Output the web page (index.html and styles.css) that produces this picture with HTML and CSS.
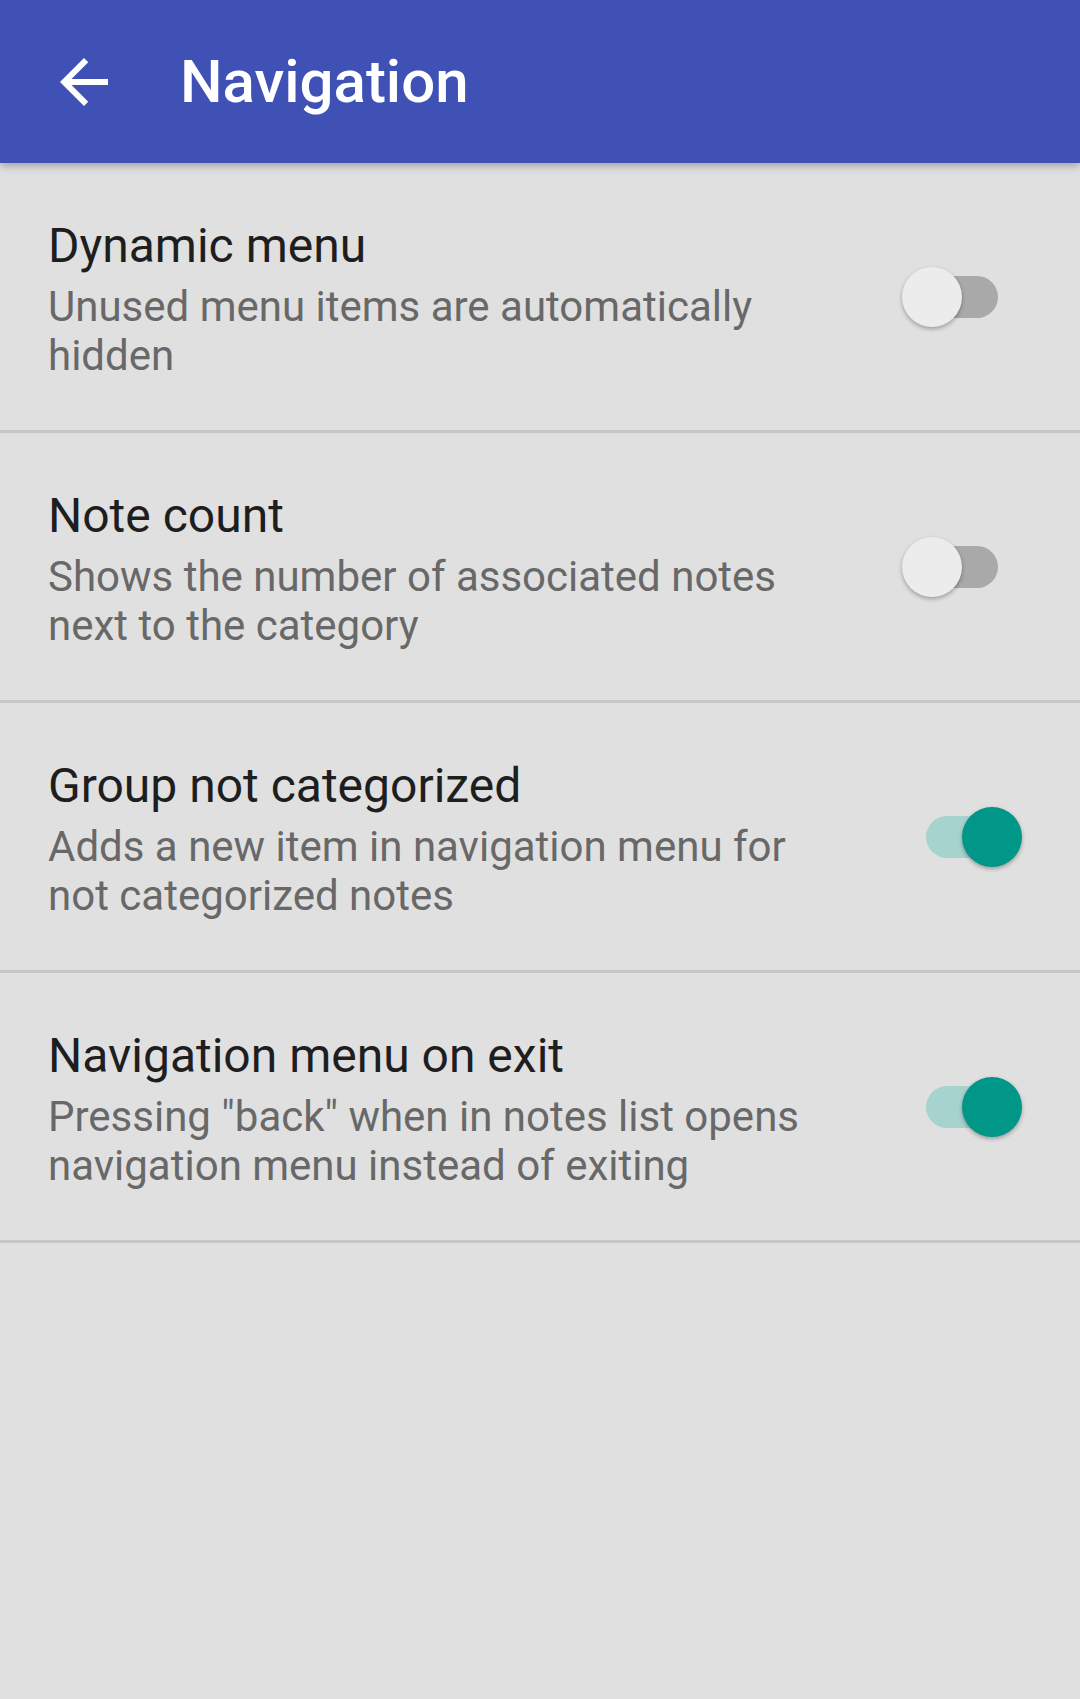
FILE: index.html
```html
<!DOCTYPE html>
<html lang="en">
<head>
<meta charset="utf-8">
<title>Navigation</title>
<link rel="stylesheet" href="styles.css">
</head>
<body>
<header class="appbar">
  <button class="back" aria-label="Back">
    <svg width="72" height="72" viewBox="0 0 24 24"><path fill="#ffffff" d="M20 11H7.83l5.59-5.59L12 4l-8 8 8 8 1.41-1.41L7.83 13H20v-2z"/></svg>
  </button>
  <h1 class="title">Navigation</h1>
</header>
<main class="prefs">
  <div class="pref">
    <div class="pref-text">
      <div class="pref-title">Dynamic menu</div>
      <div class="pref-summary">Unused menu items are automatically hidden</div>
    </div>
    <div class="switch"><span class="track"></span><span class="thumb"></span></div>
  </div>
  <div class="pref">
    <div class="pref-text">
      <div class="pref-title">Note count</div>
      <div class="pref-summary">Shows the number of associated notes next to the category</div>
    </div>
    <div class="switch"><span class="track"></span><span class="thumb"></span></div>
  </div>
  <div class="pref">
    <div class="pref-text">
      <div class="pref-title">Group not categorized</div>
      <div class="pref-summary">Adds a new item in navigation menu for not categorized notes</div>
    </div>
    <div class="switch on"><span class="track"></span><span class="thumb"></span></div>
  </div>
  <div class="pref">
    <div class="pref-text">
      <div class="pref-title">Navigation menu on exit</div>
      <div class="pref-summary">Pressing "back" when in notes list opens navigation menu instead of exiting</div>
    </div>
    <div class="switch on"><span class="track"></span><span class="thumb"></span></div>
  </div>
</main>
</body>
</html>
```
FILE: styles.css
```css
html, body {
  margin: 0;
  padding: 0;
}
body {
  background: #e0e0e0;
  font-family: Roboto, "Noto Sans", "Liberation Sans", sans-serif;
  width: 1080px;
  min-height: 1699px;
}
.appbar {
  position: relative;
  z-index: 2;
  height: 163px;
  background: #3f51b5;
  display: flex;
  align-items: center;
  padding-left: 48px;
  box-shadow: 0 3px 8px rgba(0, 0, 0, 0.28);
}
.back {
  width: 72px;
  height: 72px;
  padding: 0;
  margin: 0;
  border: 0;
  background: transparent;
  display: block;
}
.back svg {
  display: block;
}
.title {
  margin: 0 0 0 60px;
  color: #ffffff;
  font-size: 60px;
  font-weight: 500;
  line-height: 70px;
}
.prefs {
  display: flex;
  flex-direction: column;
}
.pref {
  height: 267px;
  border-bottom: 3px solid #c6c6c6;
  display: flex;
  align-items: center;
  padding-left: 48px;
}
.pref-text {
  flex: 1;
  max-width: 790px;
  padding-top: 4px;
}
.pref-title {
  font-size: 48px;
  line-height: 56px;
  color: #1e1e1e;
}
.pref-summary {
  margin-top: 8px;
  font-size: 42px;
  line-height: 49px;
  color: #686868;
}
.switch {
  position: relative;
  width: 120px;
  height: 60px;
  margin-left: auto;
  margin-right: 58px;
  flex: none;
}
.track {
  position: absolute;
  left: 24px;
  top: 9px;
  width: 72px;
  height: 42px;
  border-radius: 21px;
  background: #a9a9a9;
}
.thumb {
  position: absolute;
  left: 0;
  top: 0;
  width: 60px;
  height: 60px;
  border-radius: 50%;
  background: #ececec;
  box-shadow: 0 2px 4px rgba(0, 0, 0, 0.3);
}
.switch.on .track {
  background: #a7d3cf;
}
.switch.on .thumb {
  left: 60px;
  background: #009688;
}
```
